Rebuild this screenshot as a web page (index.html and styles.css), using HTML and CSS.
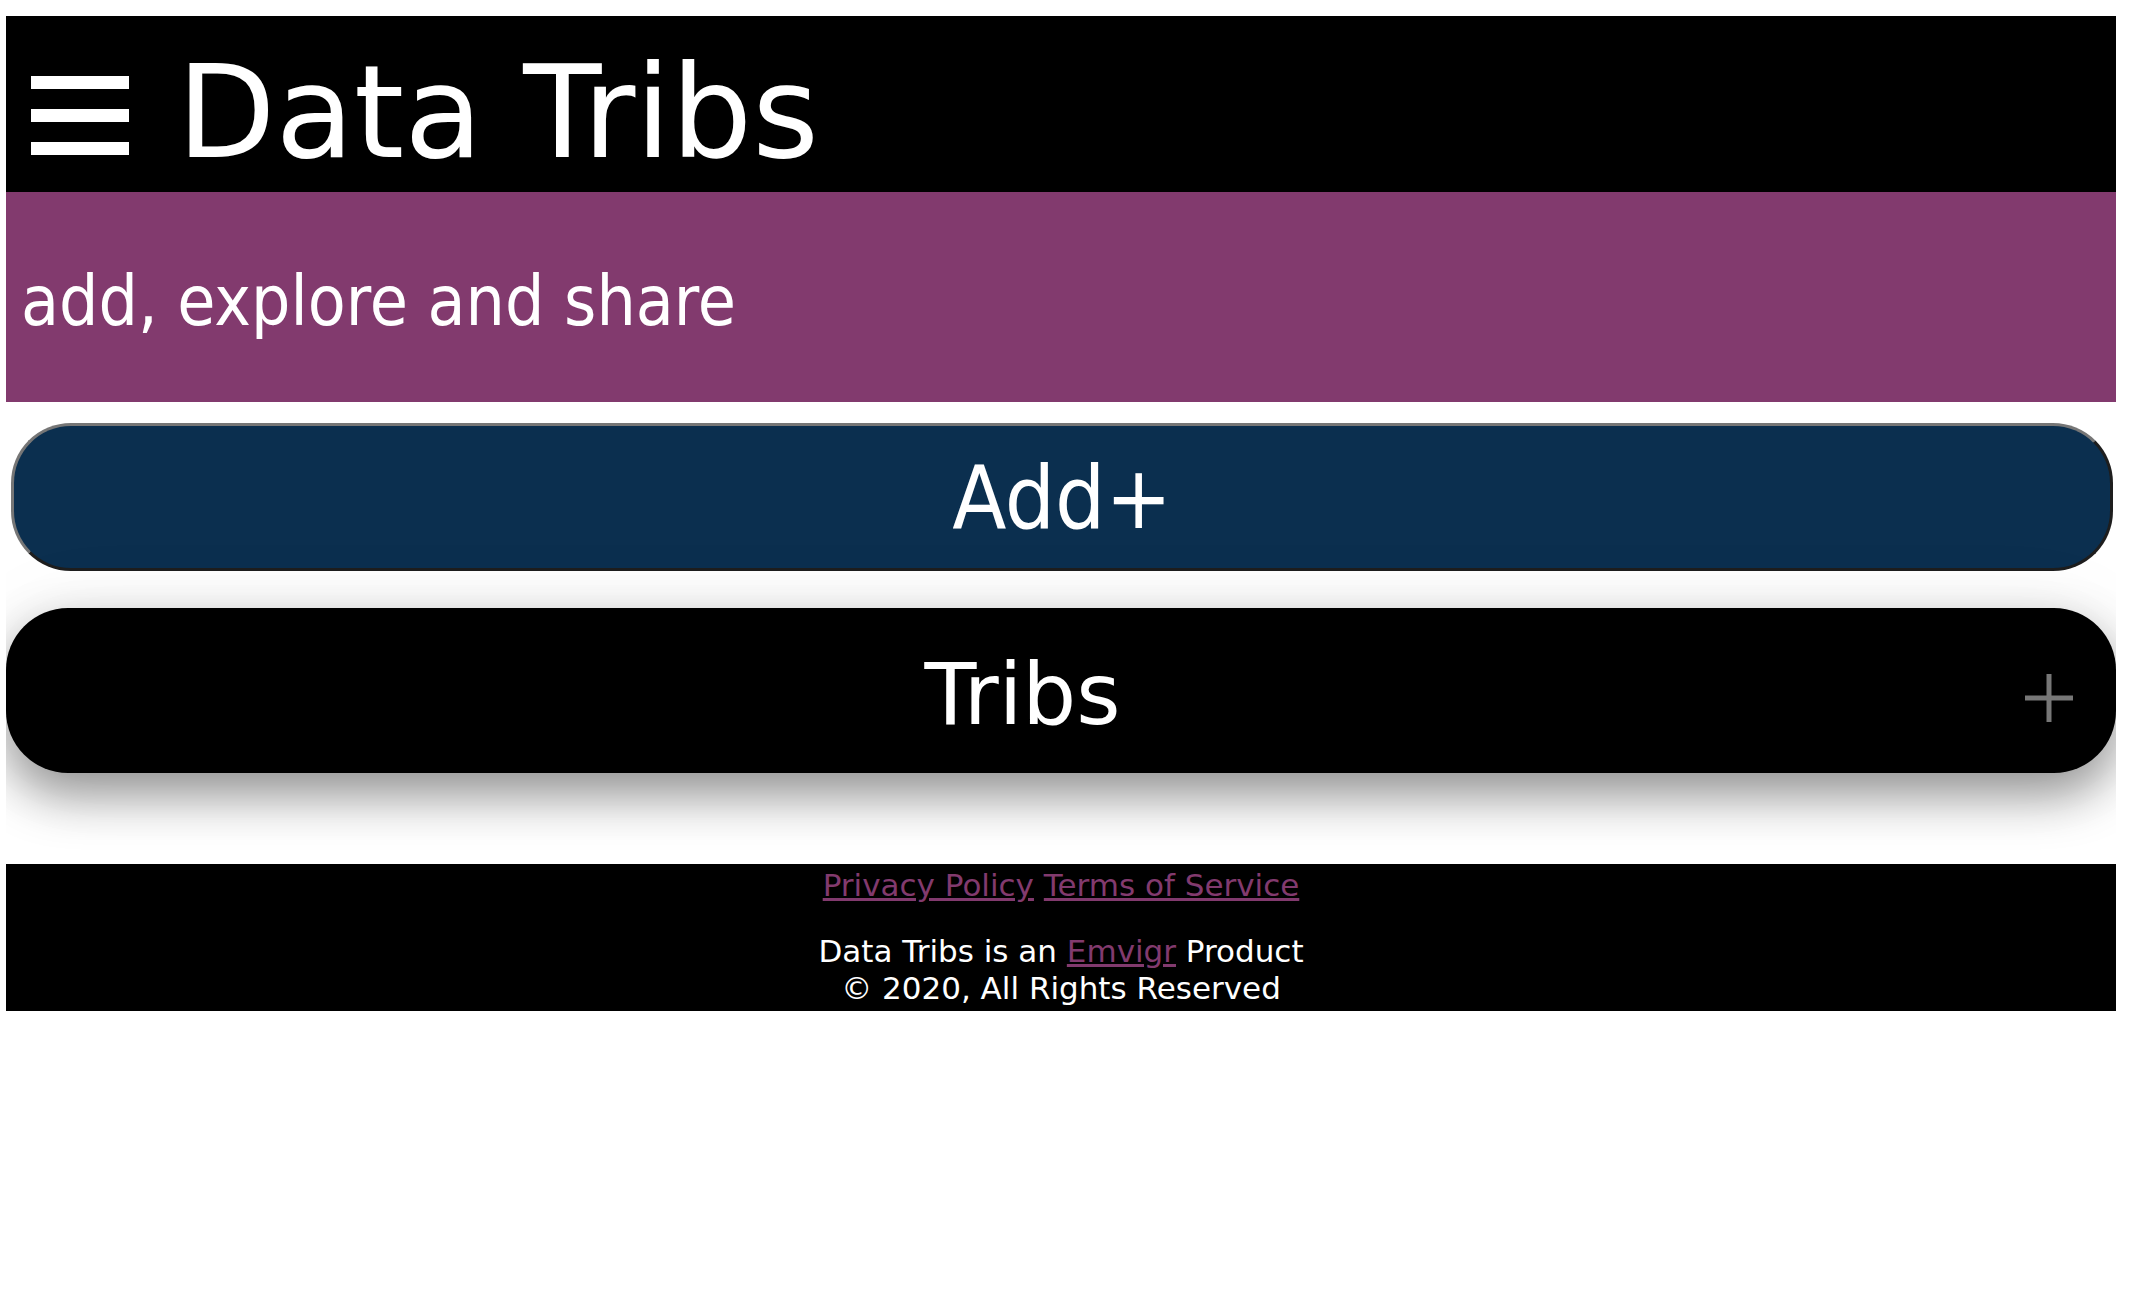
FILE: index.html
```html
<!DOCTYPE html>
<html lang="en">
<head>
<meta charset="utf-8">
<title>Data Tribs</title>
<link rel="stylesheet" href="styles.css">
</head>
<body>
<header class="topbar">
  <button class="menu-btn" aria-label="Menu">
    <svg width="98" height="80" viewBox="0 0 98 80" aria-hidden="true">
      <rect x="0" y="0" width="98" height="13" fill="#fff"/>
      <rect x="0" y="33" width="98" height="13" fill="#fff"/>
      <rect x="0" y="66" width="98" height="13" fill="#fff"/>
    </svg>
  </button>
  <h1 class="brand">Data Tribs</h1>
</header>
<section class="tagline">
  <h2 class="tagline-text">add, explore and share</h2>
</section>
<main class="content">
  <button class="add-btn">Add+</button>
  <button class="accordion">
    <span class="acc-title">Tribs</span>
    <svg class="acc-icon" width="48" height="48" viewBox="0 0 48 48" aria-hidden="true">
      <path d="M24 0V48M0 24H48" stroke="#777" stroke-width="5" fill="none"/>
    </svg>
  </button>
</main>
<footer class="site-footer">
  <p class="legal"><a href="#">Privacy Policy</a> <a href="#">Terms of Service</a></p>
  <p class="credit">Data Tribs is an <a href="#">Emvigr</a> Product<br>© 2020, All Rights Reserved</p>
</footer>
</body>
</html>
```

FILE: styles.css
```css
html, body {
  background: #fff;
}
body {
  margin: 16px 14px 0 6px;
  font-family: "DejaVu Sans", sans-serif;
}
.condensed {
  font-family: "DejaVu Sans Condensed", "DejaVu Sans", sans-serif;
  font-stretch: semi-condensed;
}
.topbar {
  height: 176px;
  box-sizing: border-box;
  background: #000;
  display: flex;
  align-items: flex-start;
  padding-left: 25px;
}
.menu-btn {
  margin-top: 60px;
  width: 98px;
  height: 80px;
  padding: 0;
  border: 0;
  background: none;
  display: block;
}
.menu-btn svg {
  display: block;
}
.brand {
  margin: 22px 0 0 48px;
  font-size: 128px;
  font-weight: normal;
  line-height: normal;
  color: #fff;
}
.tagline {
  height: 210px;
  box-sizing: border-box;
  background: #823a6e;
  display: flex;
  align-items: center;
  padding: 8px 0 0 15px;
}
.tagline-text {
  margin: 0;
  font-family: "DejaVu Sans Condensed", "DejaVu Sans", sans-serif;
  font-stretch: semi-condensed;
  font-size: 69px;
  font-weight: normal;
  line-height: normal;
  color: #fff;
}
.content {
  display: flex;
  flex-direction: column;
  padding: 21px 0 91px;
}
.add-btn {
  margin: 0 3px 0 5px;
  height: 148px;
  border: 3px solid;
  border-color: #767676 #1e1e1e #1e1e1e #767676;
  border-radius: 60px;
  background: #0b2f4f;
  color: #fff;
  font-family: "DejaVu Sans Condensed", "DejaVu Sans", sans-serif;
  font-stretch: semi-condensed;
  font-size: 88px;
  line-height: normal;
  padding: 0;
}
.accordion {
  margin-top: 37px;
  height: 165px;
  border: 0;
  border-radius: 62px;
  background: #000;
  color: #fff;
  display: flex;
  align-items: center;
  padding: 8px 43px 0 14px;
  box-shadow: 0 22px 50px rgba(0, 0, 0, 0.42), 0 0 90px rgba(0, 0, 0, 0.05);
  font-family: "DejaVu Sans", sans-serif;
}
.acc-title {
  flex: 1;
  text-align: center;
  font-size: 85px;
  line-height: normal;
}
.acc-icon {
  display: block;
  margin-top: 7px;
}
.site-footer {
  background: #000;
  color: #fff;
  text-align: center;
  font-size: 31px;
  line-height: 37px;
  padding: 3px 0 4px;
}
.site-footer p {
  margin: 0;
}
.site-footer .legal {
  margin-bottom: 29px;
}
.site-footer a {
  color: #823a6e;
  text-decoration: underline;
}
```
